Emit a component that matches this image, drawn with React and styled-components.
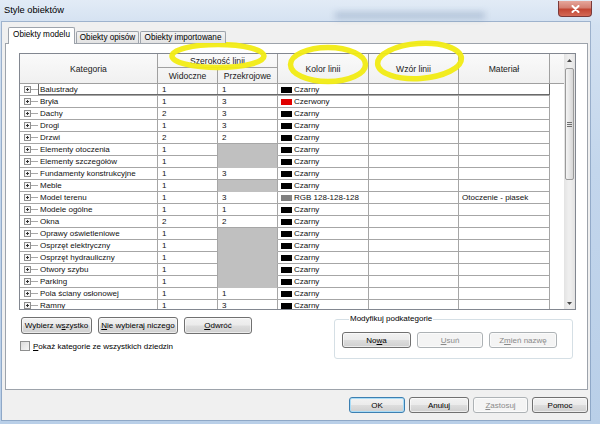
import React from 'react';
import styled, { createGlobalStyle } from 'styled-components';

const Global = createGlobalStyle`
  html, body { margin: 0; padding: 0; background: #fff; }
  body { width: 600px; height: 424px; overflow: hidden; font-family: "Liberation Sans", Arial, sans-serif; }
`;

const Window = styled.div`
  position: relative;
  width: 600px;
  height: 424px;
  display: flex;
  flex-direction: column;
  background: linear-gradient(180deg, #e2ebf6 0%, #d3e1f1 6%, #c3d6ec 40%, #b9cfe8 100%);
  overflow: hidden;
`;

const TitleBar = styled.div`
  position: relative;
  height: 22px;
  flex: none;
  display: flex;
  align-items: flex-start;
  justify-content: space-between;
  padding-left: 4px;
  padding-right: 8px;
`;

const Title = styled.span`
  font-size: 9.3px;
  line-height: 22px;
  color: #000;
  margin-top: -1px;
`;

const Glass = styled.span`
  position: absolute;
  left: 335px;
  top: 12px;
  width: 150px;
  height: 7px;
  background: rgba(110, 135, 170, 0.35);
  filter: blur(3px);
`;

const CloseBtn = styled.div`
  width: 34px;
  height: 16px;
  margin-top: 1px;
  border: 1px solid #7a3a3a;
  border-top: none;
  border-radius: 0 0 4px 4px;
  background: linear-gradient(180deg, #e6a69b 0%, #d47f72 45%, #c24634 55%, #d46a57 100%);
  display: flex;
  align-items: center;
  justify-content: center;
  box-sizing: border-box;
`;

const Client = styled.div`
  flex: 1;
  margin: 0 10px 4px 2px;
  background: #f0f0f0;
  display: flex;
  flex-direction: column;
  padding: 5px 2px 0 3px;
  box-shadow: 0 0 0 1px rgba(90, 120, 160, 0.45);
`;

const TabStrip = styled.div`
  position: relative;
  z-index: 1;
  display: flex;
  align-items: flex-end;
  height: 17px;
  padding-left: 3px;
  margin-bottom: -1px;
`;

const Tab = styled.div`
  box-sizing: border-box;
  width: ${p => p.$w}px;
  height: ${p => (p.$active ? 17 : 12)}px;
  margin-bottom: ${p => (p.$active ? 0 : 1)}px;
  margin-right: 1px;
  border: 1px solid #9da3ab;
  border-bottom: none;
  border-radius: 2px 2px 0 0;
  background: ${p => (p.$active ? '#fff' : 'linear-gradient(180deg, #f3f3f3, #e3e3e3)')};
  font-size: 8.2px;
  line-height: ${p => (p.$active ? 14 : 11)}px;
  text-align: center;
  color: #000;
  white-space: nowrap;
`;

const Panel = styled.div`
  box-sizing: border-box;
  height: 347px;
  border: 1px solid #9da3ab;
  background: #fff;
  padding: 9px 11px 0 13px;
  display: flex;
  flex-direction: column;
`;

const Table = styled.div`
  box-sizing: border-box;
  height: 257px;
  border: 1px solid #828790;
  display: flex;
`;

const GridArea = styled.div`
  flex: 1;
  display: flex;
  flex-direction: column;
  min-width: 0;
`;

const cols = '138px 60px 60px 91px 90px 91px 1fr';

const Header = styled.div`
  display: grid;
  grid-template-columns: ${cols};
  grid-template-rows: 14px 16px;
  background: linear-gradient(180deg, #fafafa, #f0f0f0);
  flex: none;
`;

const HCell = styled.div`
  box-sizing: border-box;
  grid-column: ${p => p.$col};
  grid-row: ${p => p.$row};
  border-right: ${p => (p.$last ? 'none' : '1px solid #a0a0a0')};
  border-bottom: 1px solid #a0a0a0;
  display: flex;
  align-items: center;
  justify-content: center;
  font-size: 8.6px;
  color: #1a1a1a;
  white-space: nowrap;
`;

const Body = styled.div`
  flex: 1;
  overflow: hidden;
`;

const Row = styled.div`
  position: relative;
  display: grid;
  grid-template-columns: ${cols};
  height: 12px;
`;

const Cell = styled.div`
  box-sizing: border-box;
  height: 12px;
  border-right: 1px solid #a6a6a6;
  border-bottom: 1px solid ${p => (p.$gray ? '#c0c0c0' : '#a6a6a6')};
  background: ${p => (p.$gray ? '#c0c0c0' : '#fff')};
  padding-left: ${p => p.$pad}px;
  display: flex;
  align-items: center;
  font-size: 8px;
  line-height: 11px;
  color: #111;
  white-space: nowrap;
  overflow: hidden;
`;

const Filler = styled.div`
  background: #fff;
`;

const Connector = styled.span`
  width: 7px;
  height: 1px;
  background: #a8a8a8;
  margin-right: 2px;
  flex: none;
`;

const Swatch = styled.span`
  width: 11px;
  height: 6px;
  background: ${p => p.$c};
  margin-right: 2px;
  flex: none;
`;

const Focus = styled.div`
  position: absolute;
  left: 18px;
  width: 512px;
  top: -1px;
  height: 12px;
  box-sizing: border-box;
  border: 1px solid #6a6a6a;
  pointer-events: none;
`;

const ScrollBar = styled.div`
  width: 11px;
  flex: none;
  display: flex;
  flex-direction: column;
  background: linear-gradient(90deg, #e3e3e3, #eeeeee 40%, #eeeeee 60%, #e3e3e3);
`;

const ArrowBox = styled.div`
  height: 12px;
  flex: none;
  display: flex;
  align-items: center;
  justify-content: center;
`;

const Track = styled.div`
  flex: 1;
  padding-top: 2px;
`;

const Thumb = styled.div`
  box-sizing: border-box;
  height: 112px;
  margin: 0 1px;
  border: 1px solid #9a9a9a;
  border-radius: 2px;
  background: linear-gradient(90deg, #f4f4f4, #e6e6e6 50%, #d6d6d6);
  display: flex;
  flex-direction: column;
  align-items: center;
  justify-content: center;
  gap: 1px;
`;

const Grip = styled.span`
  width: 5px;
  height: 1px;
  background: #6f6f6f;
`;

const Lower = styled.div`
  display: flex;
  margin-top: 7px;
`;

const LeftCol = styled.div`
  display: flex;
  flex-direction: column;
  margin-left: 2px;
`;

const BtnRow = styled.div`
  display: flex;
  gap: ${p => p.$gap}px;
`;

const Button = styled.div`
  box-sizing: border-box;
  width: ${p => p.$w}px;
  height: ${p => p.$h || 16}px;
  border: 1px solid ${p => (p.$disabled ? '#adb2b5' : p.$default ? '#3c7fb1' : '#707070')};
  border-radius: 3px;
  background: ${p =>
    p.$disabled
      ? '#f4f4f4'
      : 'linear-gradient(180deg, #f2f2f2 0%, #ebebeb 48%, #dddddd 52%, #cfcfcf 100%)'};
  box-shadow: ${p => (p.$default ? 'inset 0 0 0 1px #a9dcf7' : 'inset 0 0 0 1px rgba(255,255,255,0.6)')};
  color: ${p => (p.$disabled ? '#8a8a8a' : '#000')};
  font-size: 8px;
  display: flex;
  align-items: center;
  justify-content: center;
  white-space: nowrap;
`;

const U = styled.span`
  text-decoration: underline;
  text-underline-offset: 1px;
`;

const CheckRow = styled.div`
  display: flex;
  align-items: center;
  margin-top: 7px;
  margin-left: -1px;
  font-size: 8px;
  color: #000;
`;

const CheckBox = styled.span`
  box-sizing: border-box;
  width: 10px;
  height: 10px;
  border: 1px solid #8e8f8f;
  background: linear-gradient(135deg, #dcdcdc, #f6f6f6);
  margin-right: 3px;
`;

const Group = styled.fieldset`
  box-sizing: border-box;
  width: 239px;
  margin: -3px 3px 0 auto;
  padding: 8px 0 8px 7px;
  border: 1px solid #d5dfe5;
  border-radius: 3px;
  display: flex;
  gap: 6px;
  height: 45px;
`;

const Legend = styled.legend`
  font-size: 8px;
  line-height: 10px;
  padding: 0 1px;
  margin-left: 7px;
  color: #000;
`;

const Footer = styled.div`
  display: flex;
  justify-content: flex-end;
  gap: 4px;
  padding-top: 7px;
`;

const Overlay = styled.svg`
  position: absolute;
  left: 0;
  top: 0;
  pointer-events: none;
`;

const rows = [
  { n: 'Balustrady', v: '1', c: '1', col: '#000', cn: 'Czarny' },
  { n: 'Bryła', v: '1', c: '3', col: '#e00000', cn: 'Czerwony' },
  { n: 'Dachy', v: '2', c: '3' },
  { n: 'Drogi', v: '1', c: '3' },
  { n: 'Drzwi', v: '2', c: '2' },
  { n: 'Elementy otoczenia', v: '1', c: null },
  { n: 'Elementy szczegółów', v: '1', c: null },
  { n: 'Fundamenty konstrukcyjne', v: '1', c: '3' },
  { n: 'Meble', v: '1', c: null },
  { n: 'Model terenu', v: '1', c: '3', col: '#808080', cn: 'RGB 128-128-128', m: 'Otoczenie - piasek' },
  { n: 'Modele ogólne', v: '1', c: '1' },
  { n: 'Okna', v: '2', c: '2' },
  { n: 'Oprawy oświetleniowe', v: '1', c: null },
  { n: 'Osprzęt elektryczny', v: '1', c: null },
  { n: 'Osprzęt hydrauliczny', v: '1', c: null },
  { n: 'Otwory szybu', v: '1', c: null },
  { n: 'Parking', v: '1', c: null },
  { n: 'Pola ściany osłonowej', v: '1', c: '1' },
  { n: 'Ramny', v: '1', c: '3' },
];

const Expander = () => (
  <svg width="7" height="7" viewBox="0 0 7 7" style={{ flex: 'none', marginLeft: 4 }}>
    <rect x="0.5" y="0.5" width="6" height="6" fill="#f4f4f4" stroke="#8f8f8f" />
    <path d="M2 3.5h3M3.5 2v3" stroke="#333" strokeWidth="1" />
  </svg>
);

const Arrow = ({ up }) => (
  <svg width="5" height="3" viewBox="0 0 5 3">
    <path d={up ? 'M0 3L2.5 0L5 3Z' : 'M0 0L5 0L2.5 3Z'} fill="#4a4a4a" />
  </svg>
);

export default function App() {
  return (
    <>
      <Global />
      <Window>
        <TitleBar>
          <Glass />
          <Title>Style obiektów</Title>
          <CloseBtn>
            <svg width="9" height="8" viewBox="0 0 9 8">
              <path d="M1.5 1L7.5 7M7.5 1L1.5 7" stroke="#fff" strokeWidth="2" strokeLinecap="round" />
            </svg>
          </CloseBtn>
        </TitleBar>
        <Client>
          <TabStrip>
            <Tab $active $w={67}>Obiekty modelu</Tab>
            <Tab $w={63}>Obiekty opisów</Tab>
            <Tab $w={86}>Obiekty importowane</Tab>
          </TabStrip>
          <Panel>
            <Table>
              <GridArea>
                <Header>
                  <HCell $col="1" $row="1 / 3">Kategoria</HCell>
                  <HCell $col="2 / 4" $row="1">Szerokość linii</HCell>
                  <HCell $col="2" $row="2">Widoczne</HCell>
                  <HCell $col="3" $row="2">Przekrojowe</HCell>
                  <HCell $col="4" $row="1 / 3">Kolor linii</HCell>
                  <HCell $col="5" $row="1 / 3">Wzór linii</HCell>
                  <HCell $col="6" $row="1 / 3">Materiał</HCell>
                  <HCell $col="7" $row="1 / 3" $last />
                </Header>
                <Body>
                  {rows.map((r, i) => (
                    <Row key={r.n}>
                      <Cell $pad={0}>
                        <Expander />
                        <Connector />
                        {r.n}
                      </Cell>
                      <Cell $pad={4}>{r.v}</Cell>
                      <Cell $pad={4} $gray={r.c === null}>{r.c}</Cell>
                      <Cell $pad={3}>
                        <Swatch $c={r.col || '#000'} />
                        {r.cn || 'Czarny'}
                      </Cell>
                      <Cell $pad={3} />
                      <Cell $pad={3}>{r.m || ''}</Cell>
                      <Filler />
                      {i === 0 && <Focus />}
                    </Row>
                  ))}
                </Body>
              </GridArea>
              <ScrollBar>
                <ArrowBox><Arrow up /></ArrowBox>
                <Track>
                  <Thumb>
                    <Grip />
                    <Grip />
                    <Grip />
                  </Thumb>
                </Track>
                <ArrowBox><Arrow /></ArrowBox>
              </ScrollBar>
            </Table>
            <Lower>
              <LeftCol>
                <BtnRow $gap={6}>
                  <Button $w={71} $h={17}>Wybierz w<U>s</U>zystko</Button>
                  <Button $w={80} $h={17}><U>N</U>ie wybieraj niczego</Button>
                  <Button $w={68} $h={17}><U>O</U>dwróć</Button>
                </BtnRow>
                <CheckRow>
                  <CheckBox />
                  <span><U>P</U>okaż kategorie ze wszystkich dziedzin</span>
                </CheckRow>
              </LeftCol>
              <Group>
                <Legend>Modyfikuj podkategorie</Legend>
                <Button $w={69}>No<U>w</U>a</Button>
                <Button $w={66} $disabled><U>U</U>suń</Button>
                <Button $w={68} $disabled>Z<U>m</U>ień nazwę</Button>
              </Group>
            </Lower>
          </Panel>
          <Footer>
            <Button $w={56} $default>OK</Button>
            <Button $w={60}>Anuluj</Button>
            <Button $w={55} $disabled><U>Z</U>astosuj</Button>
            <Button $w={56}>Pomoc</Button>
          </Footer>
        </Client>
        <Overlay width="600" height="424" viewBox="0 0 600 424">
          <g fill="none" stroke="#f2ec14" strokeWidth="5.5" opacity="0.95">
            <ellipse cx="218" cy="56" rx="46" ry="11.5" />
            <ellipse cx="328" cy="64.5" rx="37.5" ry="17" />
            <ellipse cx="419.5" cy="61" rx="42" ry="17.5" transform="rotate(-4 419.5 61)" />
          </g>
        </Overlay>
      </Window>
    </>
  );
}
